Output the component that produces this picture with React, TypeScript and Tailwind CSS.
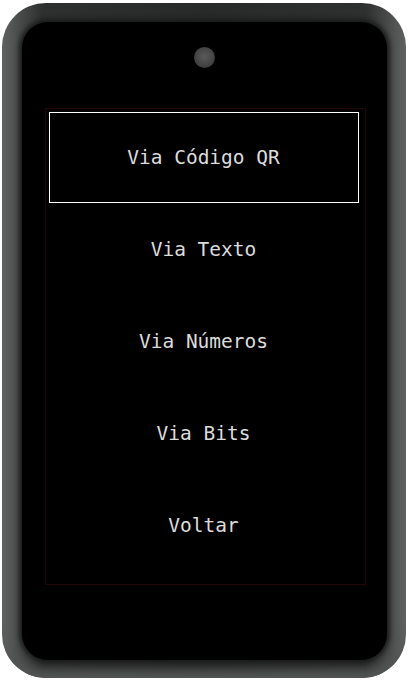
import { useState } from 'react';

const options = ['Via Código QR', 'Via Texto', 'Via Números', 'Via Bits', 'Voltar'];

export default function App() {
  const [selected, setSelected] = useState(0);

  return (
    <div className="h-[683px] w-[408px] overflow-hidden bg-white pl-[2px] pt-[3px]">
      <div className="h-[675px] w-[404px] rounded-[44px] bg-[linear-gradient(to_right,#5f6361_0%,#4a4d4c_4%,#2e302f_10%,#282929_50%,#2e302f_90%,#4a4d4c_96%,#5f6361_100%)] pb-[18px] pl-[20px] pr-[19px] pt-[19px] shadow-[inset_0_-14px_10px_-6px_#525654]">
        <div className="flex h-full w-full flex-col items-center rounded-[26px] bg-black shadow-[0_0_5px_3px_#1a1b1b]">
          <div className="mt-[25px] h-[21px] w-[21px] rounded-full bg-[radial-gradient(circle_at_50%_45%,#5a5a5a,#434343_60%,#262626)] blur-[0.7px]" />

          <div className="ml-[1px] mt-[40px] flex h-[477px] w-[321px] flex-col gap-[1px] border border-[#220707] pl-[3px] pr-[6px] pt-[3px]">
            {options.map((label, i) => (
              <button
                key={label}
                type="button"
                onClick={() => setSelected(i)}
                className={
                  i === selected
                    ? 'flex h-[91px] shrink-0 items-center justify-center border border-white'
                    : 'flex h-[91px] shrink-0 items-center justify-center border border-transparent'
                }
              >
                <span className="font-['DejaVu_Sans_Mono',monospace] text-[19.5px] leading-none text-[#dcdcdc]">{label}</span>
              </button>
            ))}
          </div>
        </div>
      </div>
    </div>
  );
}
